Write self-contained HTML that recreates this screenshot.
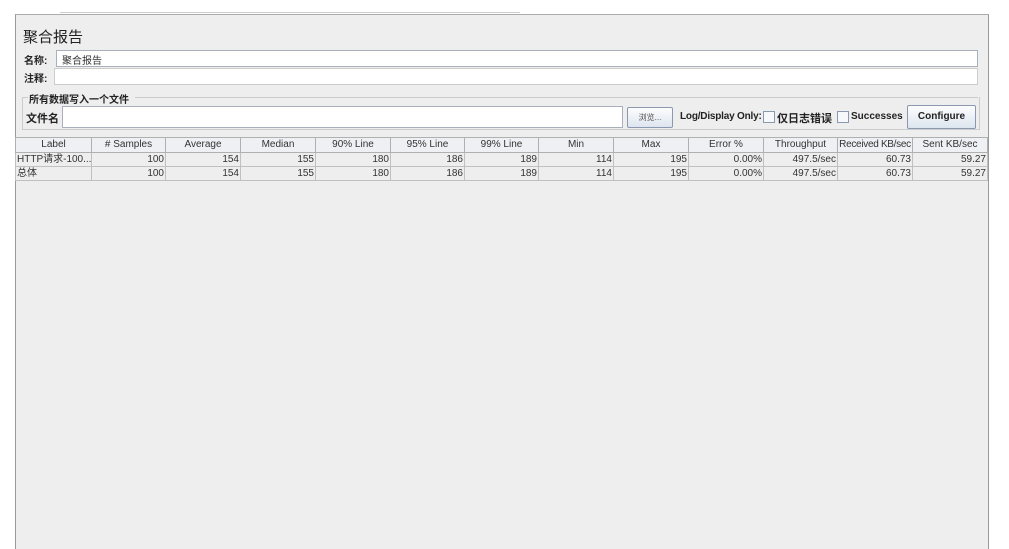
<!DOCTYPE html><html><head><style>
body{margin:0;width:1009px;height:548px;background:#fff;position:relative;overflow:hidden;font-family:"Liberation Sans","Noto Sans CJK SC",sans-serif;}
.a{position:absolute;white-space:nowrap}
.p{left:15px;top:14px;width:972px;height:534px;background:#eeeeee;border-left:1px solid #999;border-top:1px solid #aaa;border-right:1px solid #999}
.f{background:#fff;border:1px solid #a8b0bc}
.b{font-size:10px;font-weight:bold;color:#222}
table{position:absolute;left:15px;top:137px;border-collapse:collapse;font-size:10px;color:#333;table-layout:fixed;width:972px}
td{border:1px solid #c0c0c0;height:13px;padding:0 1px;text-align:right;white-space:nowrap;overflow:hidden;line-height:13px}
th{font-weight:normal;border:1px solid #b0b0b0;background:#eef0f3;height:14px;line-height:14px;padding:0;color:#333;white-space:nowrap;overflow:hidden;font-size:10px}
.btn{border:1px solid #8a99b0;background:linear-gradient(#fdfdfe,#dde5ef);border-radius:2px;text-align:center}
.cb{width:10px;height:10px;border:1px solid #8a99b0;background:#f6f8fb}
</style></head><body>
<div class="a" style="left:60px;top:12px;width:460px;height:1px;background:#ccc"></div>
<div class="a p"></div>
<div class="a" style="left:23px;top:26px;font-size:15px;color:#222">聚合报告</div>
<div class="a b" style="left:24px;top:52px">名称:</div>
<div class="a f" style="left:56px;top:50px;width:920px;height:15px"></div>
<div class="a" style="left:62px;top:52px;font-size:10px;color:#333">聚合报告</div>
<div class="a b" style="left:24px;top:70px">注释:</div>
<div class="a f" style="left:54px;top:68px;width:922px;height:15px;border-color:#ccc"></div>
<div class="a" style="left:22px;top:97px;width:956px;height:32px;border:1px solid #ccc;border-top:none"></div>
<div class="a" style="left:22px;top:97px;width:6px;height:1px;background:#ccc"></div>
<div class="a" style="left:135px;top:97px;width:843px;height:1px;background:#ccc"></div>
<div class="a b" style="left:29px;top:91px">所有数据写入一个文件</div>
<div class="a b" style="left:26px;top:110px;font-size:11px">文件名</div>
<div class="a f" style="left:62px;top:106px;width:559px;height:20px"></div>
<div class="a btn" style="left:627px;top:107px;width:44px;height:19px;font-size:8px;line-height:19px;color:#555">浏览...</div>
<div class="a b" style="left:680px;top:111px;letter-spacing:-0.2px">Log/Display Only:</div>
<div class="a cb" style="left:763px;top:111px"></div>
<div class="a b" style="left:777px;top:110px;font-size:11px">仅日志错误</div>
<div class="a cb" style="left:837px;top:111px"></div>
<div class="a b" style="left:851px;top:111px">Successes</div>
<div class="a btn b" style="left:907px;top:105px;width:67px;height:22px;line-height:22px">Configure</div>
<table>
<colgroup><col style="width:76px"><col style="width:74px"><col style="width:75px"><col style="width:75px"><col style="width:75px"><col style="width:74px"><col style="width:74px"><col style="width:75px"><col style="width:75px"><col style="width:75px"><col style="width:74px"><col style="width:75px"><col style="width:75px"></colgroup>
<tr><th>Label</th><th># Samples</th><th>Average</th><th>Median</th><th>90% Line</th><th>95% Line</th><th>99% Line</th><th>Min</th><th>Max</th><th>Error %</th><th>Throughput</th><th style="letter-spacing:-0.3px">Received KB/sec</th><th>Sent KB/sec</th></tr>
<tr><td style="text-align:left">HTTP请求-100...</td><td>100</td><td>154</td><td>155</td><td>180</td><td>186</td><td>189</td><td>114</td><td>195</td><td>0.00%</td><td>497.5/sec</td><td>60.73</td><td>59.27</td></tr>
<tr><td style="text-align:left">总体</td><td>100</td><td>154</td><td>155</td><td>180</td><td>186</td><td>189</td><td>114</td><td>195</td><td>0.00%</td><td>497.5/sec</td><td>60.73</td><td>59.27</td></tr>
</table>
</body></html>
